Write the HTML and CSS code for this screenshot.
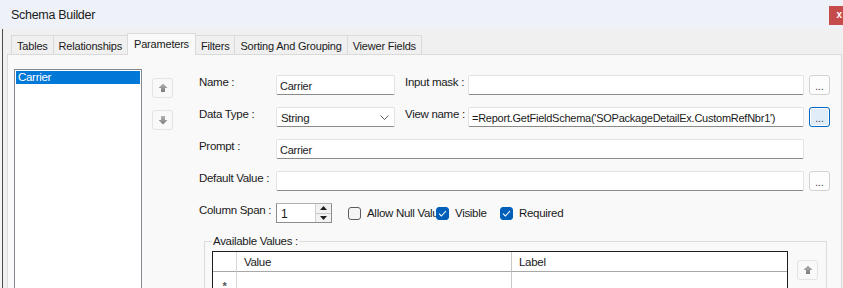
FILE: index.html
```html
<!DOCTYPE html>
<html>
<head>
<meta charset="utf-8">
<link rel="stylesheet" href="styles.css">
</head>
<body>
<div class="window">
  <div class="titlebar">
    <span class="title">Schema Builder</span>
    <span class="close">x</span>
  </div>
  <div class="main">
    <div class="tabs">
      <div class="tab">Tables</div>
      <div class="tab">Relationships</div>
      <div class="tab active">Parameters</div>
      <div class="tab">Filters</div>
      <div class="tab">Sorting And Grouping</div>
      <div class="tab">Viewer Fields</div>
    </div>
    <div class="panel">
      <div class="listbox">
        <div class="item selected">Carrier</div>
      </div>
      <div class="movebtns">
        <button class="iconbtn" type="button">
          <svg width="12" height="12" viewBox="0 0 12 12"><defs><linearGradient id="ga" x1="0" y1="0" x2="0" y2="1"><stop offset="0" stop-color="#b4b4b4"/><stop offset="1" stop-color="#7c7c7c"/></linearGradient></defs><path d="M6 1.5 L10.5 6 H8 V10 H4 V6 H1.5 Z" fill="url(#ga)"/></svg>
        </button>
        <button class="iconbtn" type="button">
          <svg width="12" height="12" viewBox="0 0 12 12"><defs><linearGradient id="gb" x1="0" y1="0" x2="0" y2="1"><stop offset="0" stop-color="#b4b4b4"/><stop offset="1" stop-color="#7c7c7c"/></linearGradient></defs><path d="M6 10.5 L10.5 6 H8 V2 H4 V6 H1.5 Z" fill="url(#gb)"/></svg>
        </button>
      </div>
      <div class="form">
        <div class="fields">
          <label class="lbl first">Name :</label>
          <input class="txt" type="text" value="Carrier">
          <label class="lbl lbl2">Input mask :</label>
          <input class="txt" type="text" value="">
          <button class="dots" type="button">...</button>

          <label class="lbl first">Data Type :</label>
          <div class="combo"><span>String</span>
            <svg width="9" height="5" viewBox="0 0 9 5"><polyline points="0.5,0.5 4.5,4.5 8.5,0.5" fill="none" stroke="#5f5f5f" stroke-width="1"/></svg>
          </div>
          <label class="lbl lbl2">View name :</label>
          <input class="txt" type="text" value="=Report.GetFieldSchema('SOPackageDetailEx.CustomRefNbr1')">
          <button class="dots focused" type="button">...</button>

          <label class="lbl first">Prompt :</label>
          <input class="txt wide" type="text" value="Carrier">

          <label class="lbl first">Default Value :</label>
          <input class="txt wide" type="text" value="">
          <button class="dots" type="button">...</button>

          <label class="lbl first">Column Span :</label>
          <div class="optrow">
            <div class="spinner">
              <span class="spinval">1</span>
              <div class="spinbtns">
                <span class="spinup"><svg width="7" height="4" viewBox="0 0 7 4"><path d="M0 4 L3.5 0 L7 4 Z" fill="#1f1f1f"/></svg></span>
                <span class="spindown"><svg width="7" height="4" viewBox="0 0 7 4"><path d="M0 0 L3.5 4 L7 0 Z" fill="#1f1f1f"/></svg></span>
              </div>
            </div>
            <div class="check nullcheck"><span class="box"></span><span class="ctext">Allow Null Value</span></div>
            <div class="check visiblecheck"><span class="box on"><svg width="9" height="7" viewBox="0 0 9 7"><polyline points="1,3.6 3.4,6 8,1" fill="none" stroke="#fff" stroke-width="1.1"/></svg></span><span class="ctext">Visible</span></div>
            <div class="check"><span class="box on"><svg width="9" height="7" viewBox="0 0 9 7"><polyline points="1,3.6 3.4,6 8,1" fill="none" stroke="#fff" stroke-width="1.1"/></svg></span><span class="ctext">Required</span></div>
          </div>
        </div>
        <fieldset class="group">
          <legend>Available Values :</legend>
          <div class="groupbody">
            <div class="datagrid">
              <div class="cell rowhead"></div>
              <div class="cell head">Value</div>
              <div class="cell head last">Label</div>
              <div class="cell rowhead star">*</div>
              <div class="cell"></div>
              <div class="cell last"></div>
            </div>
            <button class="iconbtn gridup" type="button">
              <svg width="12" height="12" viewBox="0 0 12 12"><defs><linearGradient id="gc" x1="0" y1="0" x2="0" y2="1"><stop offset="0" stop-color="#b4b4b4"/><stop offset="1" stop-color="#7c7c7c"/></linearGradient></defs><path d="M6 1.5 L10.5 6 H8 V10 H4 V6 H1.5 Z" fill="url(#gc)"/></svg>
            </button>
          </div>
        </fieldset>
      </div>
    </div>
  </div>
</div>
</body>
</html>
```
FILE: styles.css
```css
html, body {
  margin: 0;
  padding: 0;
}
body {
  width: 843px;
  height: 288px;
  overflow: hidden;
  background: #f0f0f0;
  font-family: "Liberation Sans", Arial, sans-serif;
  font-size: 11px;
  letter-spacing: -0.2px;
  color: #1a1a1a;
}
.window {
  width: 843px;
  height: 288px;
  overflow: hidden;
  display: flex;
  flex-direction: column;
}
.titlebar {
  height: 29px;
  flex: none;
  background: #eef2f8;
  display: flex;
  align-items: center;
  padding-left: 11px;
  box-sizing: border-box;
}
.title {
  font-size: 12.5px;
  color: #1b1b1b;
  letter-spacing: -0.3px;
}
.close {
  margin-left: auto;
  width: 14px;
  height: 19px;
  margin-top: 2px;
  background: #c64b4b;
  color: #fff;
  font-weight: bold;
  font-size: 10px;
  line-height: 18px;
  text-align: right;
  padding-right: 1px;
  box-sizing: border-box;
  letter-spacing: 0;
}
.main {
  flex: 1;
  background: linear-gradient(to right, #f4f4f2 0 2px, #4a4a4a 2px 3px, #f0f0f0 3px);
}
.tabs {
  display: flex;
  align-items: flex-end;
  height: 25px;
  padding-left: 11px;
  box-sizing: border-box;
}
.tab {
  height: 19px;
  line-height: 19px;
  padding: 1px 5px 0;
  box-sizing: border-box;
  border: 1px solid #dadada;
  border-bottom: none;
  border-right: none;
  background: #f0f0f0;
  white-space: nowrap;
  font-size: 11px;
  letter-spacing: -0.2px;
}
.tab:last-child {
  border-right: 1px solid #dadada;
}
.tab.active {
  height: 22px;
  line-height: 20px;
  padding: 0 6px;
  margin-bottom: -1px;
  background: #f9f9f9;
  border-right: 1px solid #dadada;
  position: relative;
  z-index: 1;
}
.tab.active + .tab {
  border-left: none;
}
.panel {
  margin-left: 7px;
  width: 835px;
  height: 300px;
  box-sizing: border-box;
  border: 1px solid #dadada;
  background: #f9f9f9;
  display: flex;
  align-items: flex-start;
}
.listbox {
  margin-left: 6px;
  margin-top: 14px;
  width: 128px;
  height: 240px;
  box-sizing: border-box;
  border: 1px solid #828790;
  background: #fff;
  padding: 1px;
  flex: none;
}
.item {
  height: 13px;
  line-height: 13px;
  padding-left: 2px;
  font-size: 11.5px;
  letter-spacing: -0.3px;
}
.item.selected {
  background: #0078d7;
  color: #fff;
}
.movebtns {
  margin-left: 10px;
  margin-top: 23px;
  display: flex;
  flex-direction: column;
  gap: 12px;
  flex: none;
}
.iconbtn {
  width: 21px;
  height: 20px;
  padding: 0;
  margin: 0;
  border: 1px solid #e4e4e4;
  border-radius: 3px;
  background: #f9f9f9;
  display: flex;
  align-items: center;
  justify-content: center;
}
.form {
  margin-left: 26px;
  margin-top: 20px;
  width: 631px;
  flex: none;
}
.fields {
  display: grid;
  grid-template-columns: 77px 119px 73px 336px 26px;
  grid-auto-rows: 20px;
  row-gap: 12px;
}
.lbl {
  align-self: start;
  line-height: 14px;
  white-space: nowrap;
  font-size: 11.5px;
  letter-spacing: -0.3px;
}
.lbl.first {
  grid-column: 1;
}
.lbl2 {
  padding-left: 10px;
}
.txt {
  font: inherit;
  font-size: 11px;
  letter-spacing: -0.25px;
  color: #1a1a1a;
  height: 20px;
  box-sizing: border-box;
  margin: 0;
  padding: 1px 3px 0;
  border: 1px solid #e3e3e3;
  border-bottom-color: #8a8a8a;
  border-radius: 2px;
  background: #fff;
  outline: none;
  width: 100%;
}
.wide {
  grid-column: 2 / 5;
}
.dots {
  margin: 0 0 0 5px;
  width: 21px;
  height: 20px;
  padding: 0 0 2px;
  box-sizing: border-box;
  border: 1px solid #d2d2d2;
  border-radius: 3px;
  background: #fdfdfd;
  font: inherit;
  font-size: 10px;
  letter-spacing: 0;
  color: #333;
  display: flex;
  align-items: flex-end;
  justify-content: center;
  line-height: 10px;
}
.dots.focused {
  border: 1px solid #0067c0;
  background: #e0ecf8;
  box-shadow: inset 0 0 0 1px #ffffff;
}
.combo {
  height: 20px;
  box-sizing: border-box;
  border: 1px solid #e3e3e3;
  border-bottom-color: #8a8a8a;
  border-radius: 2px;
  background: #fff;
  display: flex;
  align-items: center;
  padding: 2px 5px 0 4px;
  justify-content: space-between;
  font-size: 11.5px;
  letter-spacing: -0.3px;
}
.combo svg {
  margin-bottom: 1px;
}
.optrow {
  grid-column: 2 / 6;
  display: flex;
  align-items: center;
}
.spinner {
  width: 56px;
  height: 20px;
  box-sizing: border-box;
  border: 1px solid #8c8c8c;
  border-top-color: #b0b0b0;
  background: #fff;
  display: flex;
  flex: none;
}
.spinval {
  flex: 1;
  padding: 2px 0 0 4px;
  line-height: 16px;
  font-size: 12px;
}
.spinbtns {
  width: 15px;
  display: flex;
  flex-direction: column;
  border-left: 1px solid #d0d0d0;
}
.spinup, .spindown {
  flex: 1;
  display: flex;
  align-items: center;
  justify-content: center;
  background: #f2f2f2;
}
.spinup {
  border-bottom: 1px solid #c8c8c8;
}
.check {
  display: flex;
  align-items: center;
  gap: 6px;
  flex: none;
}
.nullcheck {
  margin-left: 16px;
  width: 88px;
  overflow: hidden;
  white-space: nowrap;
}
.visiblecheck {
  width: 64px;
}
.box {
  width: 13px;
  height: 13px;
  box-sizing: border-box;
  border: 1px solid #5c5c5c;
  border-radius: 3px;
  background: #f4f4f4;
  flex: none;
  display: flex;
  align-items: center;
  justify-content: center;
}
.box.on {
  background: #005fb8;
  border-color: #005fb8;
}
.ctext {
  font-size: 11.5px;
  letter-spacing: -0.3px;
  white-space: nowrap;
}
.group {
  margin: 11px 0 0 5px;
  padding: 3px 8px 10px 7px;
  border: 1px solid #dcdcdc;
  width: max-content;
  min-width: 0;
}
.group legend {
  padding: 0 1px;
  line-height: 14px;
  font-size: 11.5px;
  letter-spacing: -0.3px;
}
.groupbody {
  display: flex;
  align-items: flex-start;
}
.datagrid {
  width: 576px;
  box-sizing: border-box;
  border: 1px solid #1f1f1f;
  background: #fff;
  display: grid;
  grid-template-columns: 24px 275px 1fr;
  grid-auto-rows: 20px;
}
.cell {
  border-right: 1px solid #c8c8c8;
  border-bottom: 1px solid #a8a8a8;
  line-height: 20px;
  padding-left: 7px;
  white-space: nowrap;
}
.cell.last {
  border-right: none;
}
.cell.head {
  font-size: 11.5px;
  letter-spacing: -0.3px;
}
.rowhead {
  padding-left: 0;
  border-right-color: #d8d8d8;
}
.star {
  text-align: center;
  color: #555;
  font-weight: bold;
  line-height: 28px;
}
.gridup {
  margin-left: 9px;
  margin-top: 9px;
  flex: none;
}
```
